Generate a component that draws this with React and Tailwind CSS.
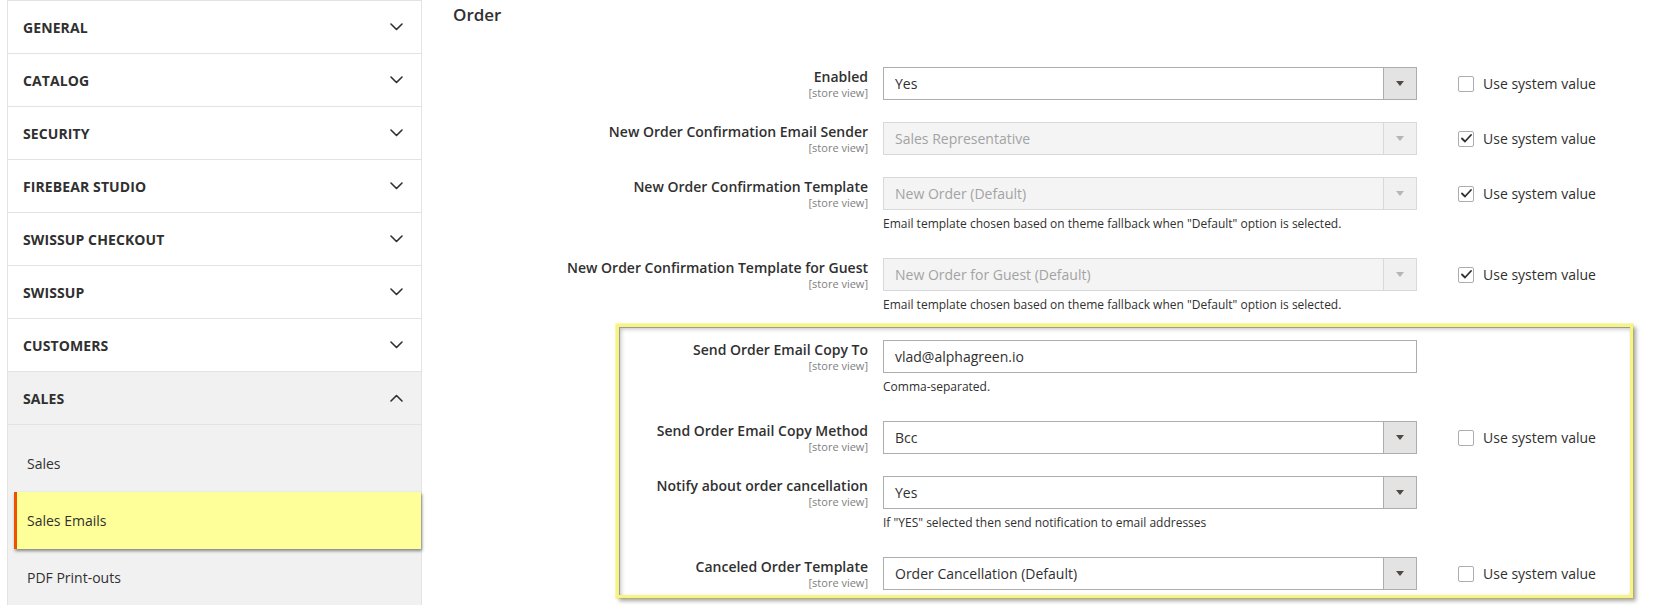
import React from 'react';

const sections = ['General', 'Catalog', 'Security', 'Firebear Studio', 'Swissup Checkout', 'Swissup', 'Customers'];
const subItems = [
  { label: 'Sales' },
  { label: 'Sales Emails', active: true },
  { label: 'PDF Print-outs' },
];

function Chevron({ up }) {
  return (
    <svg width="13" height="8" viewBox="0 0 13 8" fill="none" className="shrink-0">
      <path
        d={up ? 'M1 7 L6.5 1.5 L12 7' : 'M1 1 L6.5 6.5 L12 1'}
        stroke="#303030"
        strokeWidth="1.6"
        strokeLinecap="round"
        strokeLinejoin="round"
      />
    </svg>
  );
}

function NavSection({ title, open }) {
  return (
    <div
      className={`flex h-[53px] items-center justify-between border-b border-[#e3e3e3] pl-[15px] pr-[18px] ${
        open ? 'bg-[#f1f1f1]' : 'bg-white'
      }`}
    >
      <span className="text-[14px] font-bold uppercase tracking-[0.1px] text-[#303030]">{title}</span>
      <Chevron up={open} />
    </div>
  );
}

function Triangle({ disabled }) {
  return (
    <svg width="8" height="5" viewBox="0 0 8 5">
      <path d="M0 0 H8 L4 5 Z" fill={disabled ? '#b5b5b5' : '#514943'} />
    </svg>
  );
}

function Select({ value, disabled }) {
  return (
    <div
      className={`flex h-[33px] w-[534px] border ${
        disabled ? 'border-[#d9d9d9] bg-[#f4f4f4] text-[#a3a3a3]' : 'border-[#adadad] bg-white text-[#303030]'
      }`}
    >
      <div className="flex flex-1 items-center pl-[11px] text-[14px]">{value}</div>
      <div
        className={`flex w-[33px] items-center justify-center border-l ${
          disabled ? 'border-[#d9d9d9] bg-[#f0f0f0]' : 'border-[#adadad] bg-[#e3e3e3]'
        }`}
      >
        <Triangle disabled={disabled} />
      </div>
    </div>
  );
}

function TextInput({ value }) {
  return (
    <div className="flex h-[33px] w-[534px] items-center border border-[#adadad] bg-white pl-[11px] text-[14px] text-[#303030]">
      {value}
    </div>
  );
}

function SystemValue({ checked }) {
  return (
    <div className="flex h-[33px] items-center gap-[9px] text-[14px] text-[#303030]">
      <span className="flex h-[16px] w-[16px] items-center justify-center rounded-[2px] border border-[#adadad] bg-white">
        {checked && (
          <svg width="11" height="9" viewBox="0 0 11 9" fill="none">
            <path d="M1 4.5 L4 7.5 L10 1" stroke="#303030" strokeWidth="1.8" strokeLinecap="round" strokeLinejoin="round" />
          </svg>
        )}
      </span>
      <span>Use system value</span>
    </div>
  );
}

function Row({ label, labelW, note, system, checked, mb, children }) {
  return (
    <div className="flex" style={{ marginBottom: mb }}>
      <div className="shrink-0 text-right" style={{ width: labelW }}>
        <div className="text-[14px] font-semibold leading-[19px] text-[#303030]">{label}</div>
        <div className="text-[11px] leading-[14px] text-[#808080]">[store view]</div>
      </div>
      <div className="ml-[15px] w-[534px] shrink-0">
        {children}
        {note && <div className="mt-[5px] text-[12px] leading-[17px] text-[#303030]">{note}</div>}
      </div>
      {system && (
        <div className="ml-[41px]">
          <SystemValue checked={checked} />
        </div>
      )}
    </div>
  );
}

const fallbackNote = 'Email template chosen based on theme fallback when "Default" option is selected.';

export default function App() {
  return (
    <div className="flex h-[605px] w-[1658px] overflow-hidden bg-white font-['Open_Sans',sans-serif]">
      <aside className="ml-[7px] w-[415px] shrink-0 border-x border-t border-[#e3e3e3]">
        {sections.map((s) => (
          <NavSection key={s} title={s} />
        ))}
        <NavSection title="Sales" open />
        <div className="h-full bg-[#f1f1f1] pt-[10px]">
          {subItems.map((item) => (
            <div
              key={item.label}
              className={`ml-[6px] flex h-[57px] items-center border-l-[3px] pl-[10px] text-[14px] text-[#303030] ${
                item.active
                  ? 'border-[#eb5202] bg-[#ffff99] shadow-[1px_2px_3px_rgba(0,0,0,0.45)]'
                  : 'border-transparent'
              }`}
            >
              {item.label}
            </div>
          ))}
        </div>
      </aside>

      <main className="flex-1 pl-[31px]">
        <h2 className="pt-[3px] text-[17px] font-semibold leading-[24px] text-[#303030]">Order</h2>
        <div className="mt-[40px]">
          <Row label="Enabled" labelW={415} system mb={22}>
            <Select value="Yes" />
          </Row>
          <Row label="New Order Confirmation Email Sender" labelW={415} system checked mb={22}>
            <Select value="Sales Representative" disabled />
          </Row>
          <Row label="New Order Confirmation Template" labelW={415} system checked note={fallbackNote} mb={26}>
            <Select value="New Order (Default)" disabled />
          </Row>
          <Row label="New Order Confirmation Template for Guest" labelW={415} system checked note={fallbackNote} mb={11}>
            <Select value="New Order for Guest (Default)" disabled />
          </Row>

          <div className="ml-[163px] w-[1017px] border-[3px] border-[#f7f385] pb-[5px] pt-[13px] shadow-[inset_1px_1px_0_#9a9a9a,inset_2px_2px_4px_rgba(0,0,0,0.25),3px_3px_4px_rgba(0,0,0,0.35),0_0_1px_1px_#fbfbb8]">
            <Row label="Send Order Email Copy To" labelW={249} note="Comma-separated." mb={26}>
              <TextInput value="vlad@alphagreen.io" />
            </Row>
            <Row label="Send Order Email Copy Method" labelW={249} system mb={22}>
              <Select value="Bcc" />
            </Row>
            <Row
              label="Notify about order cancellation"
              labelW={249}
              note={'If "YES" selected then send notification to email addresses'}
              mb={26}
            >
              <Select value="Yes" />
            </Row>
            <Row label="Canceled Order Template" labelW={249} system mb={0}>
              <Select value="Order Cancellation (Default)" />
            </Row>
          </div>
        </div>
      </main>
    </div>
  );
}
